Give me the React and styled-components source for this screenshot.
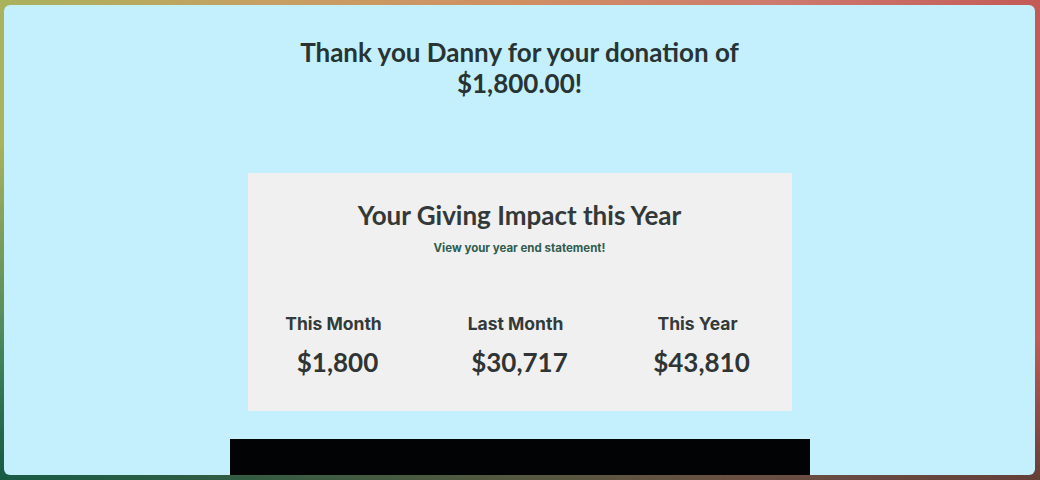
import React from "react";
import styled, { createGlobalStyle } from "styled-components";

const Global = createGlobalStyle`
  html, body { margin: 0; padding: 0; }
  body { width: 1040px; height: 480px; overflow: hidden; font-family: "Lato", "Liberation Sans", sans-serif; }
  #root { width: 1040px; height: 480px; }
`;

const Backdrop = styled.div`
  width: 1040px;
  height: 480px;
  box-sizing: border-box;
  padding: 5px 5px 5px 4px;
  display: flex;
  background:
    linear-gradient(180deg, rgba(0,0,0,0) 70%, rgba(20,40,30,0.55) 100%),
    linear-gradient(90deg, #a9b25c 0%, #c6a062 25%, #d08f62 50%, #cd7a6e 75%, #c45a55 100%),
    #6a8a5a;
  position: relative;
  &::before {
    content: "";
    position: absolute;
    inset: 0;
    background: linear-gradient(180deg, rgba(0,0,0,0) 0%, rgba(0,0,0,0) 30%, rgba(40,120,90,0.8) 75%, rgba(20,90,70,0.95) 100%);
    -webkit-mask: linear-gradient(90deg, #000 0%, rgba(0,0,0,0.4) 40%, rgba(0,0,0,0) 70%);
    mask: linear-gradient(90deg, #000 0%, rgba(0,0,0,0.4) 40%, rgba(0,0,0,0) 70%);
  }
`;

const Panel = styled.main`
  position: relative;
  flex: 1;
  background: #c4f0fe;
  border-radius: 6px;
  overflow: hidden;
  display: flex;
  flex-direction: column;
  align-items: center;
  padding-top: 32px;
`;

const Heading = styled.h1`
  margin: 0;
  width: 520px;
  flex-shrink: 0;
  text-align: center;
  font-family: "Lato", "Liberation Sans", sans-serif;
  font-weight: 700;
  font-size: 26px;
  line-height: 31px;
  color: #283434;
`;

const Card = styled.section`
  margin-top: 74px;
  width: 544px;
  height: 238px;
  flex-shrink: 0;
  box-sizing: border-box;
  background: #f0f0f0;
  padding: 27px 8px 0 0;
  display: flex;
  flex-direction: column;
  align-items: center;
`;

const CardTitle = styled.h2`
  margin: 0;
  font-family: "Lato", "Liberation Sans", sans-serif;
  font-weight: 700;
  font-size: 26px;
  line-height: 30px;
  color: #333838;
  padding-left: 8px;
`;

const StatementLink = styled.a`
  margin-top: 11px;
  font-family: "Inter", "Liberation Sans", sans-serif;
  font-weight: 700;
  font-size: 11.5px;
  line-height: 14px;
  color: #2f5c4e;
  text-decoration: none;
  padding-left: 8px;
`;

const Stats = styled.div`
  margin-top: 58px;
  width: 100%;
  display: grid;
  grid-template-columns: repeat(3, 182px);
  justify-content: center;
`;

const Stat = styled.div`
  display: flex;
  flex-direction: column;
  align-items: center;
`;

const StatLabel = styled.div`
  font-family: "Inter", "Liberation Sans", sans-serif;
  font-weight: 650;
  font-size: 17.5px;
  line-height: 22px;
  color: #333a3a;
`;

const StatValue = styled.div`
  margin-top: 11px;
  padding-left: 8px;
  font-family: "Lato", "Liberation Sans", sans-serif;
  font-weight: 700;
  font-size: 26px;
  line-height: 32px;
  color: #2f3434;
`;

const VideoBar = styled.div`
  margin-top: 28px;
  width: 580px;
  height: 60px;
  background: #020304;
  flex-shrink: 0;
`;

const stats = [
  { label: "This Month", value: "$1,800" },
  { label: "Last Month", value: "$30,717" },
  { label: "This Year", value: "$43,810" },
];

export default function App() {
  return (
    <>
      <Global />
      <Backdrop>
        <Panel>
          <Heading>Thank you Danny for your donation of $1,800.00!</Heading>
          <Card>
            <CardTitle>Your Giving Impact this Year</CardTitle>
            <StatementLink href="#">View your year end statement!</StatementLink>
            <Stats>
              {stats.map((s) => (
                <Stat key={s.label}>
                  <StatLabel>{s.label}</StatLabel>
                  <StatValue>{s.value}</StatValue>
                </Stat>
              ))}
            </Stats>
          </Card>
          <VideoBar />
        </Panel>
      </Backdrop>
    </>
  );
}
